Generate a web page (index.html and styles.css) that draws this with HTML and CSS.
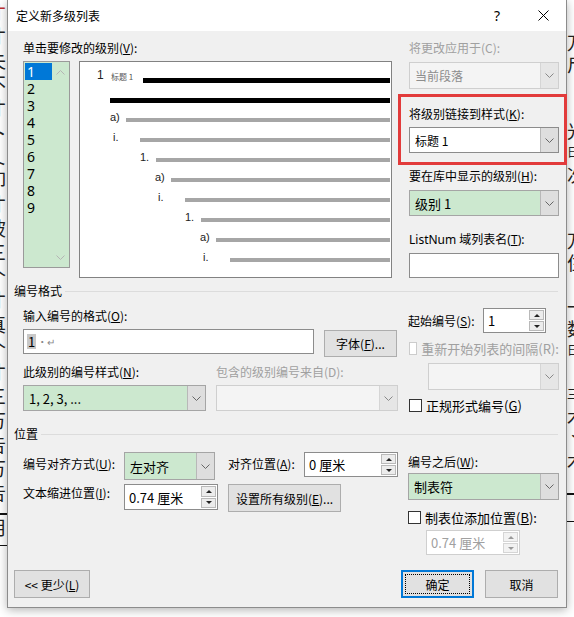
FILE: index.html
```html
<!DOCTYPE html>
<html lang="zh-CN">
<head>
  <meta charset="UTF-8" />
  <title>定义新多级列表</title>
  <link rel="stylesheet" href="styles.css">
</head>
<body>
<div class="desk">
  <!-- document text peeking out behind the dialog -->
  <div class="doc-strip doc-left">
    <div class="doc-col">
      <div class="red">才</div><div>才</div><div>失</div><div>不</div><div>才</div><div>卜</div><div>乀</div>
      <div>卸</div><div>才</div><div>陂</div><div>三</div><div>个</div><div>才</div><div>真</div>
      <div>个</div><div>才</div><div>三</div><div>万</div><div>告</div><div>万</div><div>告</div>
      <div class="ruled">用</div>
    </div>
  </div>
  <div class="doc-strip doc-right">
    <div class="doc-col">
      <div class="blank-top"></div>
      <div>万</div><div>尸</div><div></div><div></div><div>光</div><div class="small">日</div><div>次</div>
      <div></div><div></div><div>万</div><div>住</div><div></div><div>一</div><div>数</div>
      <div class="small">日</div><div></div><div class="small">三</div><div>木</div><div>丶</div><div>木</div>
      <div></div><div class="ruled"></div>
    </div>
  </div>

  <div class="dialog">
    <div class="titlebar">
      <span class="title">定义新多级列表</span>
      <span class="tb-btn help">?</span>
      <span class="tb-btn">
        <svg width="11" height="11" viewBox="0 0 11 11"><path d="M0.5 0.5 L10.5 10.5 M10.5 0.5 L0.5 10.5" stroke="#000" stroke-width="1"/></svg>
      </span>
    </div>

    <div class="body">
      <div class="top">
        <div class="top-left">
          <div class="label">单击要修改的级别(<u>V</u>):</div>
          <div class="level-row">
            <div class="level-list">
              <div class="levels">
                <div class="lvl sel">1</div>
                <div class="lvl">2</div>
                <div class="lvl">3</div>
                <div class="lvl">4</div>
                <div class="lvl">5</div>
                <div class="lvl">6</div>
                <div class="lvl">7</div>
                <div class="lvl">8</div>
                <div class="lvl">9</div>
              </div>
              <div class="vscroll">
                <svg width="9" height="5" viewBox="0 0 9 5"><path d="M0.5 4.5 L4.5 0.5 L8.5 4.5" fill="none" stroke="#b4b4b4"/></svg>
                <svg width="9" height="5" viewBox="0 0 9 5"><path d="M0.5 0.5 L4.5 4.5 L8.5 0.5" fill="none" stroke="#b4b4b4"/></svg>
              </div>
            </div>
            <div class="preview">
              <div class="pv-row r-head">
                <span class="pv-num">1</span><span class="pv-style">标题 1</span><span class="pv-bar black"></span>
              </div>
              <div class="pv-row r-wrap"><span class="pv-bar black"></span></div>
              <div class="pv-row r-a1"><span class="pv-num">a)</span><span class="pv-bar"></span></div>
              <div class="pv-row r-i1"><span class="pv-num">i.</span><span class="pv-bar"></span></div>
              <div class="pv-row r-n2"><span class="pv-num">1.</span><span class="pv-bar"></span></div>
              <div class="pv-row r-a2"><span class="pv-num">a)</span><span class="pv-bar"></span></div>
              <div class="pv-row r-i2"><span class="pv-num">i.</span><span class="pv-bar"></span></div>
              <div class="pv-row r-n3"><span class="pv-num">1.</span><span class="pv-bar"></span></div>
              <div class="pv-row r-a3"><span class="pv-num">a)</span><span class="pv-bar"></span></div>
              <div class="pv-row r-i3"><span class="pv-num">i.</span><span class="pv-bar"></span></div>
            </div>
          </div>
        </div>

        <div class="top-right">
          <div class="label off">将更改应用于(C):</div>
          <div class="combo disabled apply">
            <span class="combo-val">当前段落</span>
            <span class="combo-arrow"><svg width="9" height="5" viewBox="0 0 9 5"><path d="M0.5 0.5 L4.5 4.5 L8.5 0.5" fill="none" stroke="#888"/></svg></span>
          </div>
          <div class="label link-label">将级别链接到样式(<u>K</u>):</div>
          <div class="combo white link">
            <span class="combo-val">标题 1</span>
            <span class="combo-arrow"><svg width="9" height="5" viewBox="0 0 9 5"><path d="M0.5 0.5 L4.5 4.5 L8.5 0.5" fill="none" stroke="#666"/></svg></span>
          </div>
          <div class="label gallery-label">要在库中显示的级别(<u>H</u>):</div>
          <div class="combo green gallery">
            <span class="combo-val">级别 1</span>
            <span class="combo-arrow"><svg width="9" height="5" viewBox="0 0 9 5"><path d="M0.5 0.5 L4.5 4.5 L8.5 0.5" fill="none" stroke="#666"/></svg></span>
          </div>
          <div class="label listnum-label">ListNum 域列表名(<u>T</u>):</div>
          <div class="textbox listnum"></div>
        </div>
      </div>

      <div class="group-head"><span>编号格式</span></div>

      <div class="fmt">
        <div class="fmt-left">
          <div class="label fmt-label">输入编号的格式(<u>O</u>):</div>
          <div class="fmt-row">
            <div class="textbox fmt-input"><span class="field">1</span><span class="marks">·↵</span></div>
            <button class="btn font-btn">字体(<u>F</u>)...</button>
          </div>
          <div class="style-labels">
            <span class="label style-label">此级别的编号样式(<u>N</u>):</span>
            <span class="label off">包含的级别编号来自(D):</span>
          </div>
          <div class="style-row">
            <div class="combo green num-style">
              <span class="combo-val">1, 2, 3, ...</span>
              <span class="combo-arrow"><svg width="9" height="5" viewBox="0 0 9 5"><path d="M0.5 0.5 L4.5 4.5 L8.5 0.5" fill="none" stroke="#666"/></svg></span>
            </div>
            <div class="combo disabled include">
              <span class="combo-val"></span>
              <span class="combo-arrow"><svg width="9" height="5" viewBox="0 0 9 5"><path d="M0.5 0.5 L4.5 4.5 L8.5 0.5" fill="none" stroke="#888"/></svg></span>
            </div>
          </div>
        </div>

        <div class="fmt-right">
          <div class="start-row">
            <span class="label start-label">起始编号(<u>S</u>):</span>
            <div class="spin start-spin">
              <span class="spin-val">1</span>
              <span class="spin-btns"><span><i class="tri up"></i></span><span><i class="tri down"></i></span></span>
            </div>
          </div>
          <div class="check-row off restart">
            <span class="check"></span><span>重新开始列表的间隔(R):</span>
          </div>
          <div class="combo disabled restart-combo">
            <span class="combo-val"></span>
            <span class="combo-arrow"><svg width="9" height="5" viewBox="0 0 9 5"><path d="M0.5 0.5 L4.5 4.5 L8.5 0.5" fill="none" stroke="#888"/></svg></span>
          </div>
          <div class="check-row legal">
            <span class="check"></span><span>正规形式编号(<u>G</u>)</span>
          </div>
        </div>
      </div>

      <div class="group-head pos-head"><span>位置</span></div>

      <div class="pos">
        <div class="pos-grid">
          <span class="label pos-label r1">编号对齐方式(<u>U</u>):</span>
          <div class="combo green align">
            <span class="combo-val">左对齐</span>
            <span class="combo-arrow"><svg width="9" height="5" viewBox="0 0 9 5"><path d="M0.5 0.5 L4.5 4.5 L8.5 0.5" fill="none" stroke="#666"/></svg></span>
          </div>
          <span class="label pos-label r1">对齐位置(<u>A</u>):</span>
          <div class="spin at-spin">
            <span class="spin-val">0 厘米</span>
            <span class="spin-btns"><span><i class="tri up"></i></span><span><i class="tri down"></i></span></span>
          </div>
          <span class="label pos-label r2">文本缩进位置(<u>I</u>):</span>
          <div class="spin indent-spin">
            <span class="spin-val">0.74 厘米</span>
            <span class="spin-btns"><span><i class="tri up"></i></span><span><i class="tri down"></i></span></span>
          </div>
          <button class="btn all-btn">设置所有级别(<u>E</u>)...</button>
        </div>

        <div class="pos-right">
          <div class="label after-label">编号之后(<u>W</u>):</div>
          <div class="combo green after">
            <span class="combo-val">制表符</span>
            <span class="combo-arrow"><svg width="9" height="5" viewBox="0 0 9 5"><path d="M0.5 0.5 L4.5 4.5 L8.5 0.5" fill="none" stroke="#666"/></svg></span>
          </div>
          <div class="check-row tabstop">
            <span class="check"></span><span>制表位添加位置(<u>B</u>):</span>
          </div>
          <div class="spin disabled tab-spin">
            <span class="spin-val">0.74 厘米</span>
            <span class="spin-btns"><span><i class="tri up"></i></span><span><i class="tri down"></i></span></span>
          </div>
        </div>
      </div>

      <div class="actions">
        <button class="btn less-btn">&lt;&lt; 更少(<u>L</u>)</button>
        <span class="spacer"></span>
        <button class="btn default">确定</button>
        <button class="btn cancel">取消</button>
      </div>
    </div>
  </div>

  <!-- red highlight drawn over the screenshot -->
  <div class="mark"></div>
</div>
</body>
</html>
```

FILE: styles.css
```css
body {
  margin: 0;
  background-color: #fff;
  font-family: "Noto Sans CJK SC", "Noto Sans", sans-serif;
  font-size: 12px;
  color: #000;
}
u {
  text-decoration: underline;
  text-underline-offset: 1px;
}

/* background document */
.desk {
  position: relative;
  width: 574px;
  height: 617px;
  overflow: hidden;
  display: flex;
  justify-content: space-between;
}
.doc-strip {
  width: 7px;
  overflow: hidden;
  font-size: 19px;
  line-height: 24px;
  color: #222;
}
.doc-col {
  width: 24px;
}
.doc-col div {
  height: 24px;
  overflow: hidden;
}
.doc-left .doc-col {
  margin-left: -13px;
}
.doc-left .red {
  color: #c03030;
}
.doc-left .ruled {
  margin-top: 9px;
  height: 30px;
  border-top: 2px solid #111;
  border-bottom: 1px solid #111;
}
.doc-right .doc-col div {
  height: 22px;
  line-height: 22px;
  font-size: 18px;
}
.doc-right .blank-top {
  height: 31px !important;
}
.doc-right .small {
  font-size: 12px !important;
}
.doc-right .ruled {
  height: 26px !important;
  border-top: 2px solid #111;
  border-bottom: 1px solid #111;
}

/* dialog */
.dialog {
  position: absolute;
  left: 7px;
  top: 0;
  width: 560px;
  height: 608px;
  box-sizing: border-box;
  border: 1px solid #8c8c8c;
  border-top: none;
  background-color: #f0f0f0;
  box-shadow: 0 2px 9px rgba(0, 0, 0, 0.3);
  display: flex;
  flex-direction: column;
}
.titlebar {
  height: 31px;
  background-color: #fff;
  display: flex;
  align-items: center;
}
.title {
  flex: 1;
  padding-left: 8px;
}
.tb-btn {
  width: 46px;
  display: flex;
  justify-content: center;
  align-items: center;
}
.help {
  font-family: "Noto Sans", sans-serif;
  font-size: 14px;
}
.body {
  flex: 1;
  display: flex;
  flex-direction: column;
  padding-bottom: 9px;
}
.label {
  line-height: 16px;
  height: 16px;
  white-space: nowrap;
}
.off {
  color: #a0a0a0;
}

/* level list + preview */
.top {
  display: flex;
  padding: 9px 7px 0 15px;
}
.top-left {
  width: 369px;
}
.level-row {
  display: flex;
  align-items: flex-start;
  gap: 9px;
  margin-top: 5px;
}
.level-list {
  width: 47px;
  height: 207px;
  box-sizing: border-box;
  border: 1px solid #9a9a9a;
  background-color: #cce8cf;
  display: flex;
}
.levels {
  width: 27px;
  padding: 1px 0 0 1px;
}
.lvl {
  height: 17px;
  line-height: 17px;
  font-family: "Noto Sans", sans-serif;
  font-size: 14px;
  padding-left: 2px;
}
.lvl.sel {
  background-color: #0078d7;
  color: #fff;
}
.vscroll {
  flex: 1;
  display: flex;
  flex-direction: column;
  justify-content: space-between;
  align-items: center;
  padding: 8px 0 7px;
}
.preview {
  width: 313px;
  height: 217px;
  box-sizing: border-box;
  border: 1px solid #828282;
  background-color: #fff;
  padding: 2px 1px 0 0;
}
.pv-row {
  height: 20px;
  display: flex;
  align-items: flex-end;
}
.pv-num {
  font-family: "Liberation Sans", Arial, sans-serif;
  font-size: 11px;
  line-height: 12px;
  margin-bottom: 1px;
  color: #222;
}
.pv-bar {
  flex: 1;
  height: 4px;
  margin-bottom: 2px;
  background-color: #a6a6a6;
}
.pv-bar.black {
  height: 5px;
  margin-bottom: 1px;
  background-color: #000;
}
.r-head {
  padding-left: 17px;
}
.r-head .pv-num {
  width: 14px;
  font-size: 12px;
  margin-bottom: 3px;
}
.pv-style {
  width: 32px;
  font-size: 8px;
  line-height: 10px;
  margin-bottom: 2px;
  color: #555;
}
.r-wrap { padding-left: 30px; }
.r-a1 { padding-left: 30px; }
.r-i1 { padding-left: 33px; }
.r-n2 { padding-left: 60px; }
.r-a2 { padding-left: 75px; }
.r-i2 { padding-left: 78px; }
.r-n3 { padding-left: 105px; }
.r-a3 { padding-left: 120px; }
.r-i3 { padding-left: 123px; }
.r-a1 .pv-num, .r-n2 .pv-num, .r-a2 .pv-num, .r-n3 .pv-num, .r-a3 .pv-num {
  width: 16px;
}
.r-i1 .pv-num, .r-i2 .pv-num, .r-i3 .pv-num {
  width: 27px;
}

/* right column */
.top-right {
  width: 150px;
  margin-left: 17px;
  display: flex;
  flex-direction: column;
}
.apply { margin-top: 6px; height: 27px; }
.link-label { margin-top: 17px; }
.link { margin-top: 5px; height: 26px; }
.gallery-label { margin-top: 15px; }
.gallery { margin-top: 6px; height: 26px; }
.listnum-label { margin-top: 16px; font-family: "Noto Sans", "Noto Sans CJK SC", sans-serif; }
.listnum { margin-top: 5px; height: 25px; }

/* controls */
.combo {
  display: flex;
  box-sizing: border-box;
  border: 1px solid #a5a5a5;
}
.combo.white { background-color: #fff; border-color: #8c8c8c; }
.combo.green { background-color: #cce8cf; }
.combo.disabled { background-color: #f4f4f4; border-color: #cfcfcf; color: #8d8d8d; }
.combo-val {
  flex: 1;
  display: flex;
  align-items: center;
  padding-left: 5px;
  white-space: nowrap;
}
.combo.green .combo-val {
  font-size: 13px;
}
.combo-arrow {
  width: 17px;
  display: flex;
  align-items: center;
  justify-content: center;
  border-left: 1px solid #b8b8b8;
  background-color: #dedede;
}
.combo.disabled .combo-arrow {
  background-color: #e6e6e6;
  border-left-color: #d5d5d5;
}
.textbox {
  box-sizing: border-box;
  border: 1px solid #8c8c8c;
  background-color: #fff;
}
.btn {
  height: 28px;
  box-sizing: border-box;
  border: 1px solid #adadad;
  background-color: #e1e1e1;
  font-family: inherit;
  font-size: 12px;
  color: #000;
  padding: 0;
}
.btn.default {
  border: 2px solid #0078d7;
  outline: 1px dotted #000;
  outline-offset: -5px;
}
.spin {
  display: flex;
  box-sizing: border-box;
  height: 25px;
  border: 1px solid #8c8c8c;
  background-color: #fff;
}
.spin-val {
  flex: 1;
  display: flex;
  align-items: center;
  padding-left: 4px;
  font-size: 13px;
  white-space: nowrap;
}
.spin-btns {
  width: 15px;
  display: flex;
  flex-direction: column;
  gap: 1px;
  padding: 1px 1px 1px 0;
}
.spin-btns > span {
  flex: 1;
  display: flex;
  align-items: center;
  justify-content: center;
  box-sizing: border-box;
  border: 1px solid #b9b9b9;
  background-color: #ececec;
}
.tri {
  width: 0;
  height: 0;
  border-left: 3px solid transparent;
  border-right: 3px solid transparent;
}
.tri.up { border-bottom: 3px solid #222; }
.tri.down { border-top: 3px solid #222; }
.spin.disabled { border-color: #cfcfcf; color: #a0a0a0; }
.spin.disabled .tri.up { border-bottom-color: #999; }
.spin.disabled .tri.down { border-top-color: #999; }
.spin.disabled .spin-btns > span { border-color: #d5d5d5; background-color: #f2f2f2; }

.check-row {
  height: 16px;
  display: flex;
  align-items: center;
  gap: 4px;
  white-space: nowrap;
  font-size: 13px;
}
.check {
  width: 13px;
  height: 13px;
  box-sizing: border-box;
  border: 1px solid #333;
  background-color: #fff;
}
.check-row.off .check {
  border-color: #cccccc;
}

/* group headings */
.group-head {
  display: flex;
  align-items: center;
  height: 16px;
  line-height: 16px;
  margin-top: 5px;
  padding: 0 8px 0 6px;
}
.group-head::after {
  content: "";
  flex: 1;
  margin-left: 3px;
  border-top: 1px solid #dcdcdc;
}
.pos-head {
  margin-top: 13px;
}

/* number format */
.fmt {
  display: flex;
  padding: 0 7px 0 15px;
}
.fmt-left {
  width: 375px;
}
.fmt-label { margin-top: 9px; }
.fmt-row {
  display: flex;
  align-items: flex-start;
  margin-top: 5px;
}
.fmt-input {
  width: 291px;
  height: 25px;
  display: flex;
  align-items: center;
  padding-left: 3px;
  font-size: 13px;
}
.field {
  background-color: #c8c8c8;
  padding: 0 1px;
  line-height: 15px;
}
.marks {
  color: #888;
  font-size: 10px;
  margin-left: 1px;
}
.font-btn {
  width: 73px;
  height: 27px;
  margin: 1px 0 0 10px;
}
.style-labels {
  display: flex;
  margin-top: 7px;
}
.style-label {
  width: 193px;
}
.style-row {
  display: flex;
  gap: 10px;
  margin-top: 5px;
}
.num-style { width: 183px; height: 26px; }
.include { width: 182px; height: 26px; }
.fmt-right {
  width: 151px;
  margin-left: 10px;
  display: flex;
  flex-direction: column;
}
.start-row {
  display: flex;
  align-items: center;
  margin-top: 9px;
}
.start-label {
  width: 75px;
  font-size: 12px;
}
.start-spin {
  width: 63px;
}
.restart { margin-top: 7px; margin-left: 1px; }
.restart-combo { margin: 7px 0 0 20px; height: 27px; }
.legal { margin-top: 7px; margin-left: 1px; }

/* position */
.pos {
  display: flex;
  padding: 0 7px 0 15px;
}
.pos-grid {
  width: 375px;
  margin-top: 10px;
  display: grid;
  grid-template-columns: 101px 104px 76px 94px;
  grid-auto-rows: 28px;
  row-gap: 4px;
}
.pos-label.r1 { margin-top: 4px; }
.pos-label.r2 { margin-top: 1px; }
.align { width: 91px; height: 28px; }
.at-spin { width: 94px; }
.indent-spin { width: 94px; height: 26px; }
.all-btn {
  grid-column: 3 / 5;
  width: 113px;
}
.pos-right {
  width: 151px;
  margin-left: 10px;
  display: flex;
  flex-direction: column;
}
.after-label { margin-top: 12px; }
.after { margin-top: 3px; height: 27px; }
.tabstop { margin-top: 9px; }
.tab-spin { margin: 5px 0 0 18px; width: 94px; }

/* buttons */
.actions {
  margin-top: auto;
  display: flex;
  gap: 11px;
  padding: 0 8px 0 6px;
}
.spacer { flex: 1; }
.less-btn { width: 76px; }
.default, .cancel { width: 73px; }

/* annotation */
.mark {
  position: absolute;
  left: 398px;
  top: 94px;
  width: 169px;
  height: 71px;
  box-sizing: border-box;
  border: 3px solid #e23b3b;
}
```
